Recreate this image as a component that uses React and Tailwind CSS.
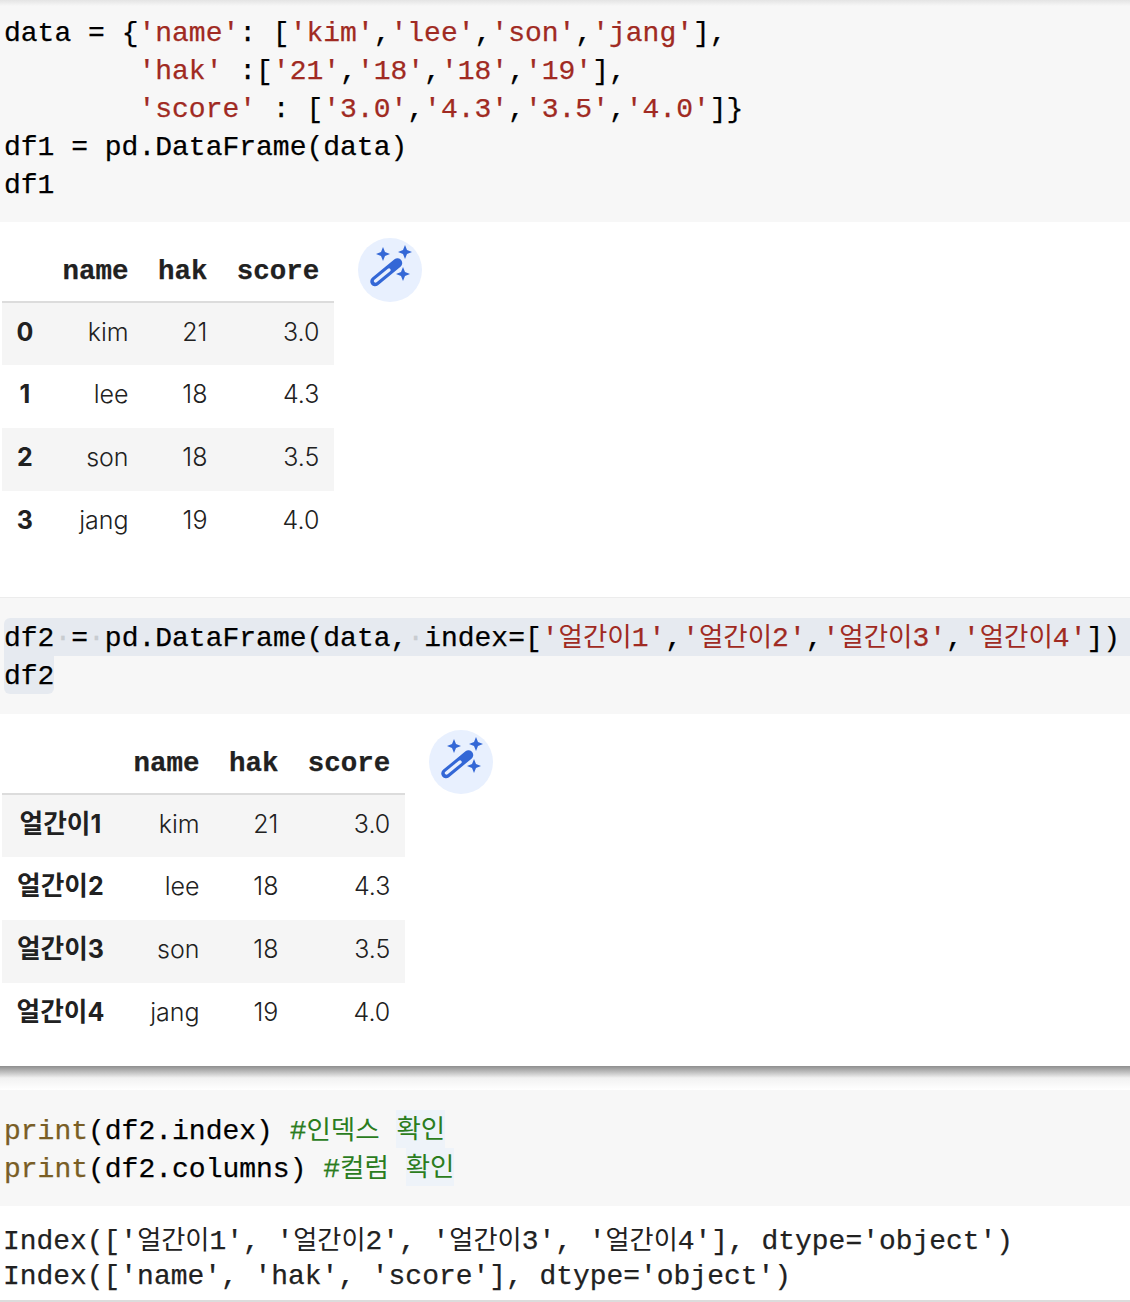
const mono = "font-['Liberation_Mono',monospace] [-webkit-text-stroke:0.25px]";
const Kr = ({ children }) => <span className="font-['Noto_Sans_CJK_KR',sans-serif] text-[26.5px] leading-[0] [-webkit-text-stroke:0px]">{children}</span>;
const KrO = ({ children }) => <span className="font-['Noto_Sans_CJK_KR',sans-serif] text-[26.2px] leading-[0] [-webkit-text-stroke:0px]">{children}</span>;
const S = ({ children }) => <span className="text-[#a02a22]">{children}</span>;
const Dot = () => <span className="text-[#c8ccd0]">·</span>;

function Wand() {
  return (
    <div className="w-16 h-16 rounded-full bg-[#e8f0fe] shrink-0 ml-[24px]">
      <svg viewBox="0 0 64 64" className="w-16 h-16" fill="#3367d6">
        <path d="M17 43.5 39.5 25" stroke="#3367d6" strokeWidth="9.5" strokeLinecap="round" fill="none" />
        <path d="M17.5 43 31 32" stroke="#e8f0fe" strokeWidth="3.4" strokeLinecap="round" fill="none" />
        <path d="M25 9 27 14 32 16 27 18 25 23 23 18 18 16 23 14Z" />
        <path d="M47 7 49 12 54 14 49 16 47 21 45 16 40 14 45 12Z" />
        <path d="M45 29 47 34 52 36 47 38 45 43 43 38 38 36 43 34Z" />
      </svg>
    </div>
  );
}

function DataTable({ rows, kr }) {
  return (
    <table className="border-collapse ml-[2px] font-['Inter',sans-serif] text-[25px] text-[#212121] font-light">
      <thead>
        <tr className="h-[64px] border-b-2 border-[#dcdcdc]">
          <th className="px-[14.5px]"></th>
          {["name", "hak", "score"].map((h) => (
            <th key={h} className={`px-[14.7px] pt-[4px] text-right font-bold text-[27.5px] ${mono} [-webkit-text-stroke:0.5px]`}>{h}</th>
          ))}
        </tr>
      </thead>
      <tbody>
        {rows.map((r, i) => (
          <tr key={i} className={`h-[63px] ${i % 2 === 0 ? "bg-[#f5f5f5]" : "bg-white"}`}>
            <th className="px-[14.5px] pb-[3px] text-center font-bold">
              {kr ? <><span className="font-['Noto_Sans_CJK_KR',sans-serif] text-[25.7px] leading-[0]">얼간이</span>{i + 1}</> : r[0]}
            </th>
            <td className="px-[14.7px] pb-[3px] text-right">{r[1]}</td>
            <td className="px-[14.7px] pb-[3px] text-right">{r[2]}</td>
            <td className="px-[14.7px] pb-[3px] text-right">{r[3]}</td>
          </tr>
        ))}
      </tbody>
    </table>
  );
}

const base = [["kim", "21", "3.0"], ["lee", "18", "4.3"], ["son", "18", "3.5"], ["jang", "19", "4.0"]];
const Line = ({ children }) => <div className="h-[38px] pt-[2px]">{children}</div>;
const PLine = ({ children }) => <div className="h-[38px] pt-[3px]">{children}</div>;
const Hi = ({ children }) => <span className="bg-[#eef3f9] inline-block h-[38px] pt-[2px] -mt-[3px] align-top"><Kr>{children}</Kr></span>;

export default function App() {
  const codeBase = `${mono} text-[28px] leading-[38px] text-black whitespace-pre`;
  const code = `${codeBase} pl-[4px]`;
  return (
    <div className="w-[1130px] h-[1302px] overflow-hidden bg-white">
      <div className="h-[6px] bg-gradient-to-b from-[#e4e4e4] to-[#f7f7f7]" />
      <div className={`bg-[#f7f7f7] h-[216px] pt-[7px] ${code}`}>
        <Line>data = {"{"}<S>'name'</S>: [<S>'kim'</S>,<S>'lee'</S>,<S>'son'</S>,<S>'jang'</S>],</Line>
        <Line>        <S>'hak'</S> :[<S>'21'</S>,<S>'18'</S>,<S>'18'</S>,<S>'19'</S>],</Line>
        <Line>        <S>'score'</S> : [<S>'3.0'</S>,<S>'4.3'</S>,<S>'3.5'</S>,<S>'4.0'</S>]{"}"}</Line>
        <Line>df1 = pd.DataFrame(data)</Line>
        <Line>df1</Line>
      </div>
      <div className="h-[376px] flex items-start pt-4 border-b border-[#ececec]">
        <DataTable rows={base.map((r, i) => [String(i), ...r])} />
        <Wand />
      </div>

      <div className={`bg-[#f7f7f7] h-[116px] pt-5 ${codeBase}`}>
        <div className="ml-[4px] bg-[#e6eaf0] rounded-tl-md h-[38px] pt-[2px]">
          df2<Dot />=<Dot />pd.DataFrame(data,<Dot />index=[<S>'<Kr>얼간이</Kr>1'</S>,<S>'<Kr>얼간이</Kr>2'</S>,<S>'<Kr>얼간이</Kr>3'</S>,<S>'<Kr>얼간이</Kr>4'</S>])
        </div>
        <div className="ml-[4px] w-[50px] bg-[#e6eaf0] rounded-b-md h-[38px] pt-[2px]">df2</div>
      </div>
      <div className="h-[352px] flex items-start pt-4">
        <DataTable kr rows={base.map((r, i) => [`얼간이${i + 1}`, ...r])} />
        <Wand />
      </div>
      <div className="h-[24px] bg-gradient-to-b from-[#8e8e8e] via-[#f2f2f2] to-white" />

      <div className={`bg-[#f7f7f7] h-[116px] pt-5 ${code}`}>
        <PLine><span className="text-[#795e26]">print</span>(df2.index) <span className="text-[#2b7d1e]">#<Kr>인덱스</Kr> <Hi>확인</Hi></span></PLine>
        <PLine><span className="text-[#795e26]">print</span>(df2.columns) <span className="text-[#2b7d1e]">#<Kr>컬럼</Kr> <Hi>확인</Hi></span></PLine>
      </div>
      <div className={`h-[96px] pt-[18px] pl-[3px] ${mono} text-[27.95px] leading-[35px] text-[#212121] whitespace-pre border-b-2 border-[#dcdcdc]`}>
        <div>Index(['<KrO>얼간이</KrO>1', '<KrO>얼간이</KrO>2', '<KrO>얼간이</KrO>3', '<KrO>얼간이</KrO>4'], dtype='object')</div>
        <div>Index(['name', 'hak', 'score'], dtype='object')</div>
      </div>
    </div>
  );
}
